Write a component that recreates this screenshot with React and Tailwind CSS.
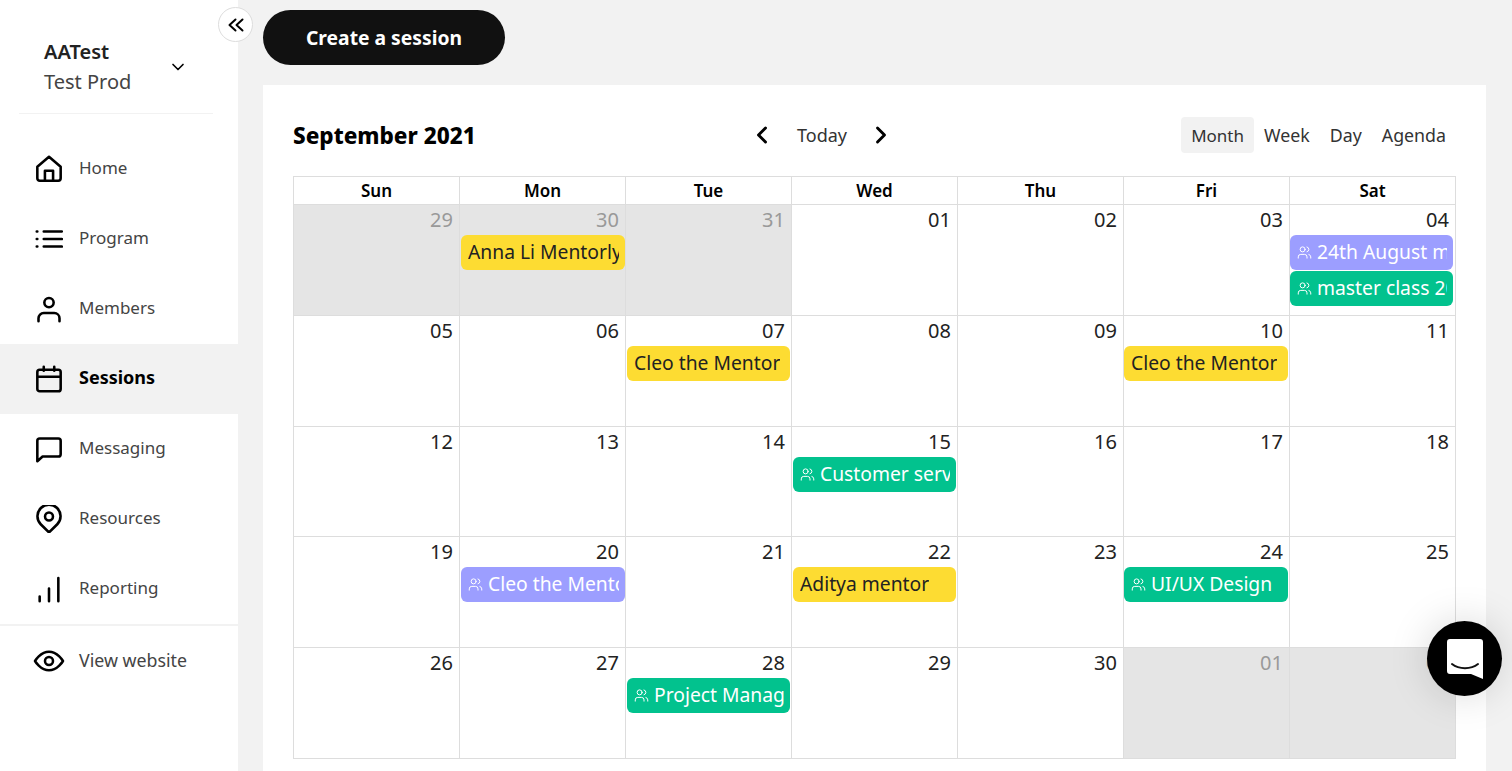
import { ChevronDown, ChevronLeft, ChevronRight, Users } from "lucide-react";

const icon = "w-7 h-7 shrink-0 fill-none stroke-black stroke-[2.2]";

const navItems = [
  {
    label: "Home",
    d: "M12 1.500 22 10V20a2 2 0 0 1-2 2H4a2 2 0 0 1-2-2V10ZM8.500 22V13.500h7V22",
  },
  {
    label: "Program",
    d: "M7.500 5.500H23M7.500 12H23M7.500 18.500H23M1.500 5.500H2M1.500 12H2M1.500 18.500H2",
  },
  {
    label: "Members",
    d: "M12 2.500a4 4 0 1 0 0 8 4 4 0 0 0 0-8ZM3 22.500V20a4.500 4.500 0 0 1 4.500-4.500h9A4.500 4.500 0 0 1 21 20V22.500",
  },
  {
    label: "Sessions",
    active: true,
    d: "M4 4h16a2 2 0 0 1 2 2v14.500a2 2 0 0 1-2 2H4a2 2 0 0 1-2-2V6a2 2 0 0 1 2-2ZM2 10h20M7.500 1.500V5M16.500 1.500V5",
  },
  {
    label: "Messaging",
    d: "M4 3h16a2 2 0 0 1 2 2v11.500a2 2 0 0 1-2 2H6.500L2 22.500V5a2 2 0 0 1 2-2Z",
  },
  {
    label: "Resources",
    d: "M12 23.500 4.900 16.500A9.900 9.900 0 1 1 19.100 16.500ZM12 6.500a3.400 3.400 0 1 0 0 6.800 3.400 3.400 0 0 0 0-6.800Z",
  },
  {
    label: "Reporting",
    d: "M4 22.500V18.500M12 22.500V11.500M20 22.500V2.500",
  },
];

// each week: [day, muted, events]
const weeks = [
  [
    ["29", true],
    ["30", true, [{ text: "Anna Li Mentorly", color: "yellow" }]],
    ["31", true],
    ["01"],
    ["02"],
    ["03"],
    [
      "04",
      false,
      [
        { text: "24th August meeting", color: "purple", group: true },
        { text: "master class 2021", color: "green", group: true },
      ],
    ],
  ],
  [
    ["05"],
    ["06"],
    ["07", false, [{ text: "Cleo the Mentor", color: "yellow" }]],
    ["08"],
    ["09"],
    ["10", false, [{ text: "Cleo the Mentor", color: "yellow" }]],
    ["11"],
  ],
  [
    ["12"],
    ["13"],
    ["14"],
    ["15", false, [{ text: "Customer service", color: "green", group: true }]],
    ["16"],
    ["17"],
    ["18"],
  ],
  [
    ["19"],
    ["20", false, [{ text: "Cleo the Mentor", color: "purple", group: true }]],
    ["21"],
    ["22", false, [{ text: "Aditya mentor", color: "yellow" }]],
    ["23"],
    ["24", false, [{ text: "UI/UX Design", color: "green", group: true }]],
    ["25"],
  ],
  [
    ["26"],
    ["27"],
    ["28", false, [{ text: "Project Management", color: "green", group: true }]],
    ["29"],
    ["30"],
    ["01", true],
    ["02", true],
  ],
];

const eventColors = {
  yellow: "bg-[#fddc32] text-[#222]",
  purple: "bg-[#9c9eff] text-white",
  green: "bg-[#02c28e] text-white",
};

// pills don't sit the same in every column, the source table has fractional widths
const pillSlot = [
  "ml-px w-[163px]",
  "ml-px w-[164px]",
  "ml-px w-[163px]",
  "ml-px w-[163px]",
  "ml-px w-[163px]",
  "w-[164px]",
  "w-[163px]",
];

function Sidebar() {
  return (
    <aside className="relative h-full w-[238px] shrink-0 bg-white">
      <button className="absolute left-[218px] top-[7px] z-10 flex h-[35px] w-[35px] items-center justify-center rounded-full border border-[#ddd] bg-white">
        <svg viewBox="0 0 18 18" className="h-[18px] w-[18px] fill-none stroke-black stroke-[2]" strokeLinecap="round" strokeLinejoin="round">
          <path d="M8.500 3.500 2.500 9l6 5.500M15.500 3.500 9.500 9l6 5.500" />
        </svg>
      </button>
      <div className="ml-[19px] mr-[25px] flex h-[114px] items-center justify-between border-b border-[#f2f2f2] pl-[25px] pr-[25px] pt-[20px]">
        <div className="text-[20px] leading-[30px]">
          <div className="font-semibold text-[#222]">AATest</div>
          <div className="text-[#444]">Test Prod</div>
        </div>
        <ChevronDown className="h-[20px] w-[20px] text-black" strokeWidth={2} />
      </div>
      <nav className="mt-[20px] border-b-2 border-[#f2f2f2]">
        {navItems.map((item) => (
          <div
            key={item.label}
            className={`flex h-[70px] items-center gap-[16px] pl-[35px] ${
              item.active ? "bg-[#f2f2f2] text-[18px] font-bold text-black" : "text-[17px] text-[#444]"
            }`}
          >
            <svg viewBox="0 0 24 24" className={icon} strokeLinecap="round" strokeLinejoin="round">
              <path d={item.d} />
            </svg>
            <span className={item.active ? "pb-[3px]" : "pb-[2px]"}>{item.label}</span>
          </div>
        ))}
      </nav>
      <div className="flex h-[70px] items-center gap-[14px] pl-[33px] text-[17.8px] text-[#444]">
        <svg viewBox="0 0 24 24" className="h-8 w-8 shrink-0 fill-none stroke-black stroke-[1.9]" strokeLinejoin="round">
          <path d="M1.500 12S5.500 5 12 5s10.500 7 10.500 7-4 7-10.500 7S1.500 12 1.500 12Z" />
          <circle cx="12" cy="12" r="3" />
        </svg>
        <span className="pb-[2px]">View website</span>
      </div>
    </aside>
  );
}

function EventPill({ text, color, group, slot }) {
  return (
    <div
      className={`mb-px flex h-[35px] items-center overflow-hidden rounded-[6px] pl-[7px] pr-[6px] text-[19.3px] ${slot} ${eventColors[color]}`}
    >
      <div className="flex items-center gap-[5px] overflow-hidden whitespace-nowrap">
        {group && <Users className="h-[15px] w-[15px] shrink-0" strokeWidth={1.6} />}
        {text}
      </div>
    </div>
  );
}

function DayCell({ day, muted, events = [], slot }) {
  return (
    <div className={`h-full min-w-0 border-l border-[#ddd] ${muted ? "bg-[#e5e5e5]" : "bg-white"}`}>
      <div className={`h-[30px] pr-[6px] text-right text-[20px] leading-[30px] ${muted ? "text-[#999]" : "text-[#222]"}`}>
        {day}
      </div>
      {events.map((ev) => (
        <EventPill key={ev.text} slot={slot} {...ev} />
      ))}
    </div>
  );
}

function Calendar() {
  return (
    <section className="flex-1 bg-white px-[30px] pt-[32px]">
      <div className="relative flex h-[36px] items-center justify-between">
        <h2 className="pt-[2px] text-[22.500px] font-extrabold text-black">September 2021</h2>
        <div className="absolute left-[455px] flex items-center text-[18px] text-[#333]">
          <ChevronLeft className="h-7 w-7 text-black" strokeWidth={2.5} />
          <span className="ml-[21px] mr-[20px] pt-px">Today</span>
          <ChevronRight className="h-7 w-7 text-black" strokeWidth={2.5} />
        </div>
        <div className="flex items-center pr-[10px] text-[17.800px] text-[#333]">
          <span className="flex h-[36px] items-center rounded-[4px] bg-[#f2f2f2] px-[10px] pt-px text-[17px]">Month</span>
          <span className="ml-[10px] pt-px">Week</span>
          <span className="ml-[20px] pt-px">Day</span>
          <span className="ml-[20px] pt-px">Agenda</span>
        </div>
      </div>
      <div className="mt-[23px] w-[1163px] border-y border-r border-[#ddd]">
        <div className="grid h-[27px] grid-cols-[repeat(7,166px)]">
          {["Sun", "Mon", "Tue", "Wed", "Thu", "Fri", "Sat"].map((d) => (
            <div key={d} className="border-l border-[#ddd] text-center text-[17px] font-semibold leading-[28px] text-black">
              {d}
            </div>
          ))}
        </div>
        {weeks.map((week, i) => (
          <div key={i} className="grid h-[110.75px] grid-cols-[repeat(7,166px)] border-t border-[#ddd]">
            {week.map(([day, muted, events], j) => (
              <DayCell key={j} day={day} muted={muted} events={events} slot={pillSlot[j]} />
            ))}
          </div>
        ))}
      </div>
    </section>
  );
}

export default function App() {
  return (
    <div className="relative flex h-[771px] w-full overflow-hidden bg-[#f2f2f2] font-['Noto_Sans',sans-serif]">
      <Sidebar />
      <main className="flex min-w-0 flex-1 flex-col pl-[25px] pr-[26px] pt-[10px]">
        <button className="mb-[20px] h-[55px] w-[242px] rounded-full bg-[#111] pt-px text-[19.300px] font-bold text-white">
          Create a session
        </button>
        <Calendar />
      </main>
      <div className="absolute left-[1427px] top-[621px] flex h-[75px] w-[75px] items-center justify-center rounded-full bg-black shadow-[0_0_40px_rgba(0,0,0,0.15)]">
        <svg viewBox="0 0 36 40" className="h-[40px] w-[36px]">
          <path d="M3 0h30a3 3 0 0 1 3 3v37l-12-5H3a3 3 0 0 1-3-3V3a3 3 0 0 1 3-3Z" fill="#fff" />
          <path d="M5 25c7 5.500 19 5.500 26 0" fill="none" stroke="#111" strokeWidth="2" strokeLinecap="round" />
        </svg>
      </div>
    </div>
  );
}
